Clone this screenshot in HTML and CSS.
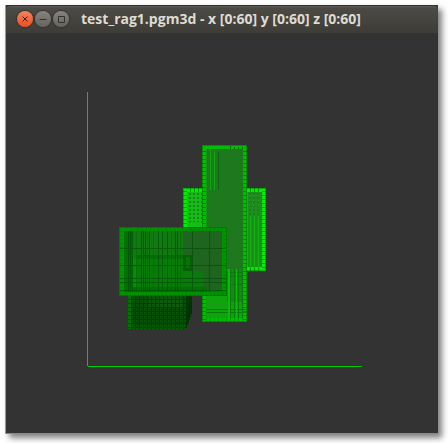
FILE: index.html
```html
<!DOCTYPE html>
<html lang="en">
<head>
<meta charset="utf-8">
<title>test_rag1.pgm3d</title>
<link rel="stylesheet" href="styles.css">
</head>
<body>
<main class="window">
  <header class="titlebar">
    <div class="controls">
      <button class="control close" type="button" aria-label="Close"><svg viewBox="0 0 16 16"><path d="M5.500 5.500l5 5M10.500 5.500l-5 5"/></svg></button>
      <button class="control" type="button" aria-label="Minimize"><svg viewBox="0 0 16 16"><path d="M4.500 8.500h7"/></svg></button>
      <button class="control" type="button" aria-label="Maximize"><svg viewBox="0 0 16 16"><path d="M5.500 5.500h6v6h-6z"/></svg></button>
    </div>
    <h1 class="title">test_rag1.pgm3d - x [0:60] y [0:60] z [0:60]</h1>
  </header>
  <svg class="scene" viewBox="6 33 432 400" shape-rendering="crispEdges" role="img" aria-label="3D voxel view">
    <defs>
      <pattern id="rungs" width="4" height="4" patternUnits="userSpaceOnUse"><path d="M0 3h4v1H0z" fill="#004800" fill-opacity=".45"/></pattern>
      <pattern id="posts" width="4" height="4" patternUnits="userSpaceOnUse"><path d="M2 0h1v4H2z" fill="#004800" fill-opacity=".45"/></pattern>
      <pattern id="dots" width="4" height="4" patternUnits="userSpaceOnUse"><path d="M1 1h2v2H1z" fill="#1d7f1d"/></pattern>
      <pattern id="mesh" width="4" height="4" patternUnits="userSpaceOnUse"><path d="M0 3h4v1H0zM3 0h1v3H3z" fill="#003200" fill-opacity=".6"/></pattern>
      <pattern id="hatch" width="4" height="4" patternUnits="userSpaceOnUse"><path d="M0 3h1v1H0zM1 2h1v1H1zM2 1h1v1H2zM3 0h1v1H3z" fill="#003500" fill-opacity=".55"/></pattern>
    </defs>

    <!-- axes -->
    <path d="M87 92h1v274h-1zM88 366h274v1H88z" fill="#00cc00"/>

    <!-- rear block -->
    <path d="M183 188h83v83h-83z" fill="#00b400"/>
    <path d="M184 189h81v81h-81z" fill="#00ec00"/>
    <path d="M187 192h15v78h-15z" fill="#14bd14"/>
    <path d="M188 192h14v30h-14z" fill="url(#dots)"/>
    <path d="M247 192h15v75h-15z" fill="#1e8c1e"/>
    <path d="M247 192h1v75h-1zM250 216h1v51h-1zM254 216h1v51h-1zM258 216h1v51h-1z" fill="#10b410"/>
    <path d="M247 193h14v24h-14z" fill="url(#dots)"/>
    <path d="M249 195h1v1h-1zM253 195h1v1h-1zM258 195h1v1h-1zM249 200h1v1h-1zM253 200h1v1h-1zM258 200h1v1h-1zM249 205h1v1h-1zM253 205h1v1h-1zM258 205h1v1h-1z" fill="#10b410"/>
    <path d="M183 188h4v83h-4zM262 188h4v83h-4z" fill="url(#rungs)"/>
    <path d="M187 188h75v4h-75zM247 267h15v4h-15z" fill="url(#posts)"/>

    <!-- tall block -->
    <path d="M202 145h45v177h-45z" fill="#009300"/>
    <path d="M203 146h43v175h-43z" fill="#00bd00"/>
    <path d="M206 149h37v169h-37z" fill="#1e781e"/>
    <path d="M206 149h1v121h-1z" fill="#1a931a"/>
    <path d="M210 149h1v41h-1zM214 151h1v39h-1z" fill="#0da80d"/>
    <path d="M218 152h1v38h-1z" fill="#126012"/>
    <path d="M206 269h37v49h-37z" fill="#0da40d"/>
    <path d="M227 269h16v33h-16z" fill="#178717"/>
    <path d="M230 269h1v49h-1zM234 269h1v49h-1zM238 269h1v49h-1zM242 269h1v49h-1zM227 272h16v1h-16zM227 276h16v1h-16zM227 284h16v1h-16zM206 309h40v1h-40zM206 312h40v1h-40z" fill="#0b7b0b"/>
    <path d="M228 269h2v49h-2zM236 269h1v49h-1z" fill="#14b414"/>
    <path d="M207 304h20v1h-20z" fill="#1a9a1a"/>
    <path d="M230 146h1v3h-1zM234 147h1v2h-1zM238 147h1v2h-1zM242 147h1v2h-1z" fill="#006500"/>
    <path d="M202 148h4v174h-4zM243 148h4v174h-4z" fill="url(#rungs)"/>
    <path d="M206 318h37v4h-37z" fill="url(#posts)" opacity=".5"/>

    <!-- lower block -->
    <path d="M128 295h58v34h-58z" fill="#075007"/>
    <path d="M128 295h4v34h-4z" fill="#007200"/>
    <path d="M132 325h54v4h-54z" fill="#005c00"/>
    <path d="M149 296h33v12h-33z" fill="#0a580a"/>
    <path d="M158 298h24v10h-24z" fill="#105a10"/>
    <path d="M128 295h58v34h-58z" fill="url(#mesh)"/>
    <path d="M132 308h54v21h-54z" fill="url(#hatch)"/>
    <path d="M186 295h6v18l-3 9-3 7z" fill="#003500"/>
    <path d="M186 295h6v18l-3 9-3 7z" fill="url(#hatch)"/>

    <!-- front block -->
    <path d="M119 227h108v69H119z" fill="#007a00"/>
    <path d="M120 228h106v67H120z" fill="#009400"/>
    <path d="M124 231h98v61h-98z" fill="#107a10"/>
    <path d="M183 231h39v59h-39z" fill="#1f641f"/>
    <path d="M124 231h4v61h-4z" fill="#047004"/>
    <path d="M128 231h4v61h-4z" fill="#066806"/>
    <path d="M134 255h49v36h-49z" fill="#077d07"/>
    <path d="M183 271h20v20h-20z" fill="#0b790b"/>
    <path d="M137 255h50v4h-50z" fill="#057005"/>
    <path d="M133 258h3v33h-3z" fill="#0a8a0a"/>
    <path d="M183 255h9v16h-9z" fill="#066006"/>
    <path d="M186 257h4v11h-4z" fill="#087508"/>
    <path d="M130 287h77v5h-77z" fill="#057205"/>
    <path d="M130 287h77v5h-77zM136 255h47v4h-47zM183 255h9v16h-9z" fill="url(#hatch)" opacity=".35"/>
    <path d="M128 231h1v61h-1zM130 231h1v61h-1zM132 231h1v61h-1zM141 231h1v61h-1zM143 231h1v61h-1zM145 231h1v61h-1zM149 231h1v61h-1zM158 231h1v61h-1zM162 231h1v61h-1zM167 231h1v61h-1zM175 231h1v61h-1zM177 231h1v61h-1zM192 231h1v61h-1zM209 231h1v61h-1zM120 248h106v1H120zM120 265h106v1H120zM120 278h106v1H120zM120 282h106v1H120zM120 290h106v1H120z" fill="#004d08" fill-opacity=".65"/>
    <path d="M136 231h1v61h-1zM147 231h1v61h-1zM153 231h1v61h-1zM171 231h1v61h-1zM180 231h1v61h-1z" fill="#005900" fill-opacity=".3"/>
    <path d="M119 231h4v65h-4zM223 231h4v65h-4z" fill="url(#rungs)" opacity=".35"/>
    <path d="M123 227h100v4H123zM123 292h100v4H123z" fill="url(#posts)" opacity=".35"/>
  </svg>
</main>
</body>
</html>
```
FILE: styles.css
```css
* { box-sizing: border-box; }

body {
  margin: 0;
  padding: 5px 10px 9px 5px;
  min-height: 100vh;
  display: flex;
  background: #fff;
}

.window {
  flex: 1;
  display: flex;
  flex-direction: column;
  border-left: 1px solid #999;
  border-bottom: 1px solid #888;
  background: #333;
  box-shadow: 4px 4px 6px rgba(0, 0, 0, .5);
}

.titlebar {
  display: flex;
  align-items: center;
  gap: 12px;
  height: 28px;
  padding: 0 11px 1px;
  border-top: 1px solid #33322e;
  border-radius: 4px 4px 0 0;
  background: linear-gradient(#5b5a54, #4b4a45 2px, #3d3c37);
}

.controls {
  display: flex;
  gap: 2px;
}

.control {
  width: 16px;
  height: 16px;
  padding: 0;
  border: 0;
  border-radius: 50%;
  background: linear-gradient(#85837c, #65645e);
  box-shadow: 0 0 1px 1px #35342f;
}

.control svg {
  display: block;
  width: 16px;
  height: 16px;
  fill: none;
  stroke: #33322e;
  stroke-width: 1;
}

.close { background: linear-gradient(#f4845f, #e6501f); }
.close svg { stroke: #4a1d0c; }

.title {
  margin: 0;
  color: #dfdbd2;
  font: bold 14px/20px "Open Sans", "Noto Sans", sans-serif;
  white-space: nowrap;
}

.scene {
  display: block;
  width: 100%;
  flex: 1;
  min-height: 0;
}
```
